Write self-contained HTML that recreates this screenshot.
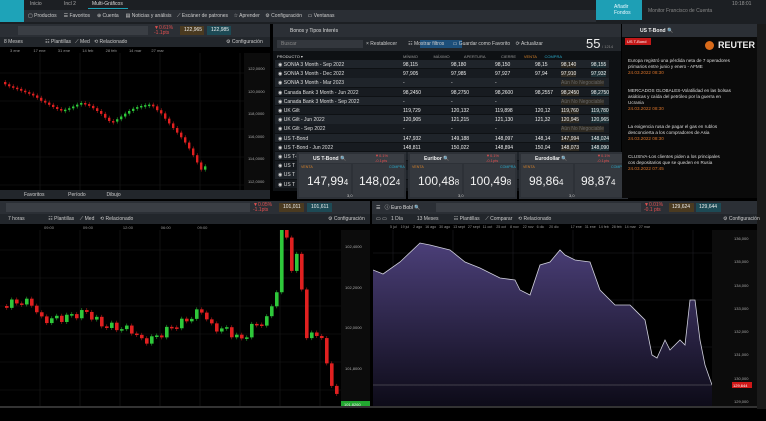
<!DOCTYPE html>
<html><head><meta charset="utf-8"><style>
*{margin:0;padding:0;box-sizing:border-box}
body{width:766px;height:421px;background:#000;overflow:hidden;position:relative;font-family:"Liberation Sans",sans-serif;color:#cfd3d8;font-size:5px}
.a{position:absolute}
.bar{background:#2b2f35}
.tb{background:#22262b}
.t{white-space:nowrap}
</style></head><body>
<div class="a" style="left:0;top:0;width:766px;height:24px;background:#1c1f23"></div>
<div class="a" style="left:0;top:0;width:24px;height:22px;background:#1ea3b8"></div>
<div class="a t" style="left:30px;top:1px;color:#aaa">Inicio</div>
<div class="a t" style="left:64px;top:1px;color:#aaa">Incl 2</div>
<div class="a t" style="left:92px;top:1px;color:#ddd">Multi-Gráficos</div>
<div class="a" style="left:88px;top:8px;width:40px;height:1px;background:#1ea3b8"></div>
<div class="a" style="left:24px;top:10px;width:572px;height:12px;background:#2a2e34"></div>
<div class="a t" style="left:28px;top:13px;color:#ccc">▢ Productos &nbsp;&nbsp;&nbsp; ☰ Favoritos &nbsp;&nbsp;&nbsp; ⊕ Cuenta &nbsp;&nbsp;&nbsp; ▤ Noticias y análisis &nbsp;&nbsp; ⟋ Escáner de patrones &nbsp;&nbsp; ☆ Aprender &nbsp;&nbsp; ⚙ Configuración &nbsp;&nbsp; ▭ Ventanas</div>
<div class="a" style="left:596px;top:0;width:46px;height:20px;background:#1e9fb5"></div>
<div class="a t" style="left:614px;top:4px;color:#e8f8ff;line-height:6px">Añadir<br>Fondos</div>
<div class="a t" style="left:648px;top:8px;color:#888">Monitor Francisco de Cuenta</div>
<div class="a t" style="left:732px;top:1px;color:#999">10:18:01</div>
<div class="a bar" style="left:0;top:24px;width:270px;height:13px"></div>
<div class="a" style="left:18px;top:26px;width:130px;height:9px;background:#3a3e44"></div>
<div class="a t" style="left:154px;top:26px;color:#e05050;line-height:5px">▼0.61%<br>-1.1pts</div>
<div class="a" style="left:180px;top:26px;width:24px;height:9px;background:#4a3a20"></div>
<div class="a t" style="left:184px;top:27px;color:#eee">122,965</div>
<div class="a" style="left:207px;top:26px;width:24px;height:9px;background:#1d4a55"></div>
<div class="a t" style="left:211px;top:27px;color:#eee">122,985</div>
<div class="a tb" style="left:0;top:37px;width:270px;height:10px"></div>
<div class="a t" style="left:4px;top:39px;color:#ccc">8 Meses &nbsp;&nbsp;&nbsp;&nbsp;&nbsp;&nbsp;&nbsp;&nbsp;&nbsp;&nbsp;&nbsp;&nbsp;&nbsp;&nbsp; ☷ Plantillas &nbsp; ⟋ Med &nbsp; ⟲ Relacionado</div>
<div class="a t" style="left:226px;top:39px;color:#ccc">⚙ Configuración</div>
<div class="a t" style="left:10px;top:48px;color:#999;font-size:4px">3 ene &nbsp;&nbsp;&nbsp;&nbsp;&nbsp;&nbsp;&nbsp;&nbsp;&nbsp;&nbsp; 17 ene &nbsp;&nbsp;&nbsp;&nbsp;&nbsp;&nbsp;&nbsp;&nbsp;&nbsp; 31 ene &nbsp;&nbsp;&nbsp;&nbsp;&nbsp;&nbsp;&nbsp;&nbsp;&nbsp; 14 feb &nbsp;&nbsp;&nbsp;&nbsp;&nbsp;&nbsp;&nbsp;&nbsp;&nbsp; 28 feb &nbsp;&nbsp;&nbsp;&nbsp;&nbsp;&nbsp;&nbsp;&nbsp;&nbsp; 14 mar &nbsp;&nbsp;&nbsp;&nbsp;&nbsp;&nbsp;&nbsp; 27 mar</div>
<div class="a" style="left:244px;top:53px;width:26px;height:137px;background:#0c0c0c"></div>
<div class="a t" style="left:248px;top:58px;color:#aaa;font-size:4px;line-height:22.5px">122,0000<br>120,0000<br>118,0000<br>116,0000<br>114,0000<br>112,0000</div>
<svg class="a" id="c1" style="left:0;top:53px" width="244" height="137"></svg>
<div class="a tb" style="left:0;top:190px;width:270px;height:9px"></div>
<div class="a t" style="left:24px;top:192px;color:#ccc">Favoritos &nbsp;&nbsp;&nbsp;&nbsp;&nbsp;&nbsp;&nbsp;&nbsp;&nbsp;&nbsp;&nbsp;&nbsp;&nbsp;&nbsp;&nbsp; Período &nbsp;&nbsp;&nbsp;&nbsp;&nbsp;&nbsp;&nbsp;&nbsp;&nbsp;&nbsp;&nbsp;&nbsp;&nbsp; Dibujo</div>
<div class="a bar" style="left:273px;top:24px;width:348px;height:13px"></div>
<div class="a t" style="left:290px;top:28px;color:#ddd">Bonos y Tipos Interés</div>
<div class="a tb" style="left:273px;top:37px;width:348px;height:14px"></div>
<div class="a" style="left:277px;top:40px;width:86px;height:8px;background:#33373d"></div>
<div class="a t" style="left:281px;top:41px;color:#888">Buscar</div>
<div class="a" style="left:420px;top:40px;width:42px;height:8px;background:#1d4f7a"></div>
<div class="a t" style="left:366px;top:41px;color:#ccc">× Restablecer &nbsp;&nbsp;&nbsp;&nbsp;&nbsp;&nbsp; ☷ Mostrar filtros &nbsp;&nbsp;&nbsp;&nbsp; ▭ Guardar como Favorito &nbsp;&nbsp; ⟳ Actualizar</div>
<div class="a t" style="left:586px;top:36px;color:#eee;font-size:13px">55</div>
<div class="a t" style="left:602px;top:44px;color:#888;font-size:4px">/ 1214</div>
<div class="a" id="tbl" style="left:273px;top:51px;width:348px;height:140px;background:#0e1114"></div>
<div class="a" id="tiles" style="left:297px;top:152px;width:343px;height:47px"></div>
<div class="a bar" style="left:622px;top:24px;width:144px;height:13px"></div>
<div class="a t" style="left:640px;top:28px;color:#eee;font-weight:bold">US T-Bond 🔍</div>
<div class="a" style="left:622px;top:37px;width:135px;height:161px;background:#0a0a0a"></div>
<div class="a" style="left:625px;top:38px;width:26px;height:7px;background:#c21818"></div>
<div class="a t" style="left:627px;top:39px;color:#fff;font-size:4px">US T-Bond</div>
<div class="a" style="left:705px;top:41px;width:9px;height:9px;border-radius:50%;background:#d86a1a"></div>
<div class="a t" style="left:718px;top:40px;color:#eee;font-weight:bold;font-size:9px">REUTER</div>
<div class="a t" style="left:628px;top:58px;color:#ddd;line-height:6px;font-size:4.6px">Europa registró una pérdida neta de 7 operadores<br>primarios entre junio y enero - AFME<br><span style="color:#d8732a">24.03.2022 08:30</span><br><br><br>MERCADOS GLOBALES-Volatilidad en las bolsas<br>asiáticas y caída del petróleo por la guerra en<br>Ucrania<br><span style="color:#d8732a">24.03.2022 08:30</span><br><br><br>La exigencia rusa de pagar el gas en rublos<br>desconcierta a los compradores de Asia<br><span style="color:#d8732a">24.03.2022 08:30</span><br><br><br>CLUSIVA-Los clientes piden a los principales<br>cos depositarios que se queden en Rusia<br><span style="color:#d8732a">24.03.2022 07:45</span></div>
<div class="a" style="left:757px;top:24px;width:9px;height:385px;background:#1a1a1a"></div>
<div class="a bar" style="left:0;top:201px;width:370px;height:13px"></div>
<div class="a" style="left:6px;top:203px;width:244px;height:9px;background:#3a3e44"></div>
<div class="a t" style="left:253px;top:203px;color:#e05050;line-height:5px">▼0.05%<br>-1.1pts</div>
<div class="a" style="left:279px;top:203px;width:25px;height:9px;background:#4a3a20"></div>
<div class="a t" style="left:283px;top:204px;color:#eee">101,011</div>
<div class="a" style="left:307px;top:203px;width:25px;height:9px;background:#1d4a55"></div>
<div class="a t" style="left:311px;top:204px;color:#eee">101,611</div>
<div class="a tb" style="left:0;top:214px;width:370px;height:10px"></div>
<div class="a t" style="left:8px;top:216px;color:#ccc">7 horas &nbsp;&nbsp;&nbsp;&nbsp;&nbsp;&nbsp;&nbsp;&nbsp;&nbsp;&nbsp;&nbsp;&nbsp;&nbsp;&nbsp;&nbsp; ☷ Plantillas &nbsp;&nbsp; ⟋ Med &nbsp;&nbsp; ⟲ Relacionado</div>
<div class="a t" style="left:328px;top:216px;color:#ccc">⚙ Configuración</div>
<div class="a t" style="left:44px;top:225px;color:#999;font-size:4px">09:00 &nbsp;&nbsp;&nbsp;&nbsp;&nbsp;&nbsp;&nbsp;&nbsp;&nbsp;&nbsp;&nbsp;&nbsp;&nbsp;&nbsp;&nbsp;&nbsp;&nbsp;&nbsp;&nbsp;&nbsp;&nbsp;&nbsp;&nbsp;&nbsp; 09:00 &nbsp;&nbsp;&nbsp;&nbsp;&nbsp;&nbsp;&nbsp;&nbsp;&nbsp;&nbsp;&nbsp;&nbsp;&nbsp;&nbsp;&nbsp;&nbsp;&nbsp;&nbsp;&nbsp;&nbsp;&nbsp;&nbsp;&nbsp;&nbsp;&nbsp; 12:00 &nbsp;&nbsp;&nbsp;&nbsp;&nbsp;&nbsp;&nbsp;&nbsp;&nbsp;&nbsp;&nbsp;&nbsp;&nbsp;&nbsp;&nbsp;&nbsp;&nbsp;&nbsp;&nbsp;&nbsp;&nbsp;&nbsp;&nbsp; 06:00 &nbsp;&nbsp;&nbsp;&nbsp;&nbsp;&nbsp;&nbsp;&nbsp;&nbsp;&nbsp;&nbsp;&nbsp;&nbsp;&nbsp;&nbsp;&nbsp;&nbsp;&nbsp;&nbsp;&nbsp;&nbsp;&nbsp; 09:00</div>
<div class="a" style="left:341px;top:230px;width:29px;height:176px;background:#0c0c0c"></div>
<div class="a t" style="left:345px;top:227px;color:#aaa;font-size:4px;line-height:40.5px">102,4000<br>102,2000<br>102,0000<br>101,8000</div>
<div class="a" style="left:341px;top:401px;width:29px;height:6px;background:#22a830"></div>
<div class="a t" style="left:344px;top:402px;color:#eee;font-size:4px">101,8260</div>
<svg class="a" id="c2" style="left:0;top:230px" width="341" height="176"></svg>
<div class="a bar" style="left:372px;top:201px;width:385px;height:13px"></div>
<div class="a t" style="left:376px;top:204px;color:#ddd">☰ &nbsp; ⓘ Euro Bobl 🔍</div>
<div class="a" style="left:436px;top:203px;width:205px;height:9px;background:#3a3e44"></div>
<div class="a t" style="left:644px;top:203px;color:#e05050;line-height:5px">▼0.01%<br>-0.1 pts</div>
<div class="a" style="left:669px;top:203px;width:25px;height:9px;background:#4a3a20"></div>
<div class="a t" style="left:672px;top:204px;color:#eee">129,624</div>
<div class="a" style="left:696px;top:203px;width:25px;height:9px;background:#1d4a55"></div>
<div class="a t" style="left:699px;top:204px;color:#eee">129,644</div>
<div class="a tb" style="left:372px;top:214px;width:385px;height:10px"></div>
<div class="a t" style="left:376px;top:216px;color:#ccc">▭ ▭ &nbsp; 1 Día &nbsp;&nbsp;&nbsp;&nbsp;&nbsp;&nbsp;&nbsp;&nbsp; 13 Meses &nbsp;&nbsp;&nbsp;&nbsp;&nbsp;&nbsp;&nbsp;&nbsp;&nbsp; ☷ Plantillas &nbsp;&nbsp; ⟋ Comparar &nbsp;&nbsp; ⟲ Relacionado</div>
<div class="a t" style="left:723px;top:216px;color:#ccc">⚙ Configuración</div>
<div class="a t" style="left:390px;top:225px;color:#999;font-size:3.6px">5 jul &nbsp;&nbsp; 19 jul &nbsp;&nbsp; 2 ago &nbsp; 16 ago &nbsp; 30 ago &nbsp; 13 sept &nbsp; 27 sept &nbsp; 11 oct &nbsp;&nbsp; 25 oct &nbsp;&nbsp; 8 nov &nbsp;&nbsp; 22 nov &nbsp; 6 dic &nbsp;&nbsp;&nbsp; 20 dic &nbsp;&nbsp;&nbsp;&nbsp;&nbsp;&nbsp;&nbsp;&nbsp;&nbsp;&nbsp; 17 ene &nbsp; 31 ene &nbsp; 14 feb &nbsp; 28 feb &nbsp; 14 mar &nbsp; 27 mar</div>
<div class="a" style="left:712px;top:230px;width:45px;height:176px;background:#0c0c0c"></div>
<div class="a t" style="left:734px;top:227px;color:#aaa;font-size:4px;line-height:23.3px">136,000<br>135,000<br>134,000<br>133,000<br>132,000<br>131,000<br>130,000<br>129,000</div>
<div class="a" style="left:732px;top:382px;width:20px;height:6px;background:#d01818"></div>
<div class="a t" style="left:733px;top:383px;color:#fff;font-size:4px">129,644</div>
<svg class="a" style="left:373px;top:230px" width="339" height="176">
<defs><linearGradient id="g" x1="0" y1="0" x2="0" y2="1"><stop offset="0" stop-color="#4b3f78"/><stop offset="1" stop-color="#0d0b18"/></linearGradient></defs>
<g stroke="#1e1e24" stroke-width="0.6">
<line x1="20" y1="0" x2="20" y2="176"/><line x1="80" y1="0" x2="80" y2="176"/><line x1="140" y1="0" x2="140" y2="176"/><line x1="200" y1="0" x2="200" y2="176"/><line x1="260" y1="0" x2="260" y2="176"/><line x1="320" y1="0" x2="320" y2="176"/>
<line x1="0" y1="23" x2="339" y2="23"/><line x1="0" y1="70" x2="339" y2="70"/><line x1="0" y1="117" x2="339" y2="117"/><line x1="0" y1="164" x2="339" y2="164"/></g>
<path id="ar" d="" fill="url(#g)" stroke="none"/>
<polyline id="ln" points="" fill="none" stroke="#cfcfdc" stroke-width="0.8"/>
<line x1="0" y1="155" x2="339" y2="155" stroke="#888" stroke-width="0.4"/>
</svg>
<div class="a" style="left:0;top:406px;width:757px;height:2px;background:#333"></div>
<script>
function candles(id,w,h,pts,step,bw,amp){
 var s=document.getElementById(id),o='';
 for(var gx=40;gx<w;gx+=40)o+='<line x1="'+gx+'" y1="0" x2="'+gx+'" y2="'+h+'" stroke="#1b1b1b" stroke-width="0.6"/>';
 for(var gy=20;gy<h;gy+=28)o+='<line x1="0" y1="'+gy+'" x2="'+w+'" y2="'+gy+'" stroke="#1b1b1b" stroke-width="0.6"/>';
 var ys=[];for(var x=0;x<=pts[pts.length-1][0];x+=step){for(var i=1;i<pts.length&&pts[i][0]<x;i++);var a=pts[i-1],b=pts[i]||a;var t=b[0]==a[0]?0:(x-a[0])/(b[0]-a[0]);ys.push([x,a[1]+(b[1]-a[1])*t+Math.sin(x*1.7)*amp]);}
 for(var k=1;k<ys.length;k++){var y0=ys[k-1][1],y1=ys[k][1],x=ys[k][0];var c=y1<y0?'#2ec83a':'#e02020';var top=Math.min(y0,y1),hh=Math.max(1.5,Math.abs(y1-y0));
 o+='<line x1="'+(x+bw/2)+'" y1="'+(top-2)+'" x2="'+(x+bw/2)+'" y2="'+(top+hh+2)+'" stroke="'+c+'" stroke-width="0.5"/><rect x="'+x+'" y="'+top+'" width="'+bw+'" height="'+hh+'" fill="'+c+'"/>';}
 s.innerHTML=o;}
candles('c1',244,137,[[0,29],[15,33],[40,50],[60,55],[80,52],[100,60],[110,67],[135,57],[150,50],[160,58],[175,80],[190,100],[200,115],[205,110]],4,2.4,2.5);
candles('c2',341,176,[[0,76],[15,72],[30,73],[40,90],[60,88],[85,82],[100,95],[130,100],[140,111],[155,107],[165,100],[185,90],[200,80],[210,97],[225,100],[240,110],[250,97],[265,90],[275,60],[280,0],[285,5],[290,40],[298,20],[303,110],[318,100],[326,140],[336,170]],5,3.6,4);
var P=[[0,40],[10,44],[27,32],[47,13],[57,15],[77,20],[92,32],[107,38],[127,48],[142,50],[147,60],[157,65],[167,35],[177,32],[187,20],[192,25],[202,30],[217,32],[227,60],[242,75],[257,75],[272,90],[279,125],[284,128],[292,110],[297,120],[307,110],[312,115],[317,70],[322,70],[327,110],[332,135],[339,155]];
document.getElementById('ln').setAttribute('points',P.map(function(p){return p.join(',')}).join(' '));
document.getElementById('ar').setAttribute('d','M'+P.map(function(p){return p.join(',')}).join(' L')+' L339,176 L0,176 Z');
var rows=[['SONIA 3 Month - Sep 2022','98,115','98,180','98,150','98,15','98,140','98,155'],['SONIA 3 Month - Dec 2022','97,905','97,985','97,927','97,94','97,910','97,932'],['SONIA 3 Month - Mar 2023','-','-','-','','Aún No Negociable',''],['Canada Bank 3 Month - Jun 2022','98,2450','98,2750','98,2600','98,2557','98,2450','98,2750'],['Canada Bank 3 Month - Sep 2022','-','-','-','','Aún No Negociable',''],['UK Gilt','119,729','120,132','119,898','120,12','119,760','119,780'],['UK Gilt - Jun 2022','120,905','121,215','121,130','121,32','120,945','120,965'],['UK Gilt - Sep 2022','-','-','-','','Aún No Negociable',''],['US T-Bond','147,932','149,188','148,097','148,14','147,994','148,024'],['US T-Bond - Jun 2022','148,811','150,022','148,894','150,04','148,073','148,090'],['US T-Bond - Sep 2022','','','','','',''],['US T','','','','','',''],['US T','','','','','',''],['US T','','','','','','']];
var h='<div style="position:absolute;left:4px;top:3px;color:#ddd;font-size:4px">PRODUCTO ▾</div><div style="position:absolute;left:130px;top:3px;color:#999;font-size:4px">MÍNIMO &nbsp;&nbsp;&nbsp;&nbsp;&nbsp;&nbsp;&nbsp;&nbsp;&nbsp;&nbsp;&nbsp;&nbsp; MÁXIMO &nbsp;&nbsp;&nbsp;&nbsp;&nbsp;&nbsp;&nbsp;&nbsp;&nbsp;&nbsp;&nbsp; APERTURA &nbsp;&nbsp;&nbsp;&nbsp;&nbsp;&nbsp;&nbsp;&nbsp;&nbsp;&nbsp;&nbsp;&nbsp; CIERRE &nbsp;&nbsp;&nbsp;&nbsp;&nbsp; <span style="color:#d8832a">VENTA</span> &nbsp;&nbsp;&nbsp;&nbsp;&nbsp; <span style="color:#2aa8c8">COMPRA</span></div>';
var xs=[130,178,222,262,288,318];
rows.forEach(function(r,i){var y=9+i*9.2;h+='<div style="position:absolute;left:2px;top:'+y+'px;width:334px;height:8.4px;background:'+(i%2?'#171b20':'#1f242a')+'"></div><div style="position:absolute;left:5px;top:'+(y+2)+'px;color:#ddd;white-space:nowrap">◉ '+r[0]+'</div>';
 for(var j=1;j<7;j++){if(!r[j])continue;var c=j==5&&r[j].indexOf('Aún')==0?'#666':'#eee';var bg=j==5?'background:#2e2a22;':j==6?'background:#1c3036;':'';h+='<div style="position:absolute;left:'+xs[j-1]+'px;top:'+(y+2)+'px;color:'+c+';white-space:nowrap;'+bg+'">'+r[j]+'</div>';}});
document.getElementById('tbl').innerHTML=h;
var T=[['US T-Bond','147,99','4','148,02','4'],['Euribor','100,48','8','100,49','8'],['Eurodollar','98,86','4','98,87','4']],t='';
T.forEach(function(q,i){var x=i*111;t+='<div style="position:absolute;left:'+x+'px;top:0;width:109px;height:47px;background:#2d3137"></div><div style="position:absolute;left:'+(x+2)+'px;top:2px;width:105px;height:9px;background:#3a3e44"></div><div style="position:absolute;left:'+(x+16)+'px;top:4px;color:#eee;font-weight:bold;white-space:nowrap">'+q[0]+' 🔍</div><div style="position:absolute;left:'+(x+78)+'px;top:2px;color:#e05050;font-size:4px;line-height:4.5px">▼0.1%<br>-0.1pts</div><div style="position:absolute;left:'+(x+2)+'px;top:12px;width:52px;height:33px;background:#34383e"></div><div style="position:absolute;left:'+(x+56)+'px;top:12px;width:51px;height:33px;background:#34383e"></div><div style="position:absolute;left:'+(x+4)+'px;top:13px;color:#d8832a;font-size:3.6px">VENTA</div><div style="position:absolute;left:'+(x+92)+'px;top:13px;color:#2aa8c8;font-size:3.6px">COMPRA</div><div style="position:absolute;left:'+(x+10)+'px;top:22px;color:#f2f2f2;font-size:12px;white-space:nowrap">'+q[1]+'<span style="font-size:8px">'+q[2]+'</span></div><div style="position:absolute;left:'+(x+62)+'px;top:22px;color:#f2f2f2;font-size:12px;white-space:nowrap">'+q[3]+'<span style="font-size:8px">'+q[4]+'</span></div><div style="position:absolute;left:'+(x+50)+'px;top:41px;color:#ccc;font-size:4px">3,0</div>';});
document.getElementById('tiles').innerHTML=t;
</script>
</body></html>
